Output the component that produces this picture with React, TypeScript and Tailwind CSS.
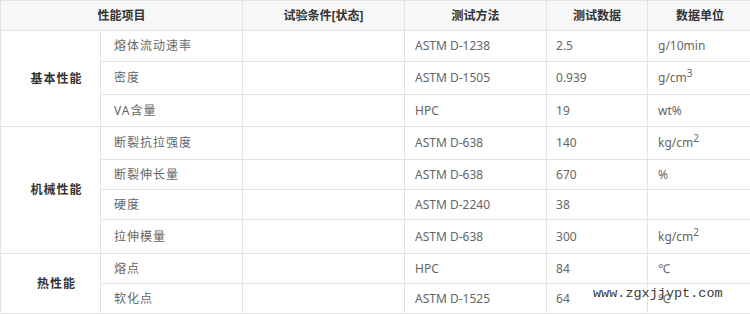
import React from "react";

type Row = {
  group?: string;
  span?: number;
  item: string;
  method: string;
  value: string;
  unit: React.ReactNode;
  h: string;
};

const cm2 = (
  <>
    kg/cm<sup className="text-[10px]">2</sup>
  </>
);

const rows: Row[] = [
  { group: "基本性能", span: 3, item: "熔体流动速率", method: "ASTM D-1238", value: "2.5", unit: "g/10min", h: "h-[31px]" },
  {
    item: "密度",
    method: "ASTM D-1505",
    value: "0.939",
    unit: (
      <>
        g/cm<sup className="text-[10px]">3</sup>
      </>
    ),
    h: "h-[33px]",
  },
  { item: "VA含量", method: "HPC", value: "19", unit: "wt%", h: "h-[32px]" },
  { group: "机械性能", span: 4, item: "断裂抗拉强度", method: "ASTM D-638", value: "140", unit: cm2, h: "h-[33px]" },
  { item: "断裂伸长量", method: "ASTM D-638", value: "670", unit: "%", h: "h-[30px]" },
  { item: "硬度", method: "ASTM D-2240", value: "38", unit: "", h: "h-[30px]" },
  { item: "拉伸模量", method: "ASTM D-638", value: "300", unit: cm2, h: "h-[34px]" },
  { group: "热性能", span: 2, item: "熔点", method: "HPC", value: "84", unit: "℃", h: "h-[30px]" },
  { item: "软化点", method: "ASTM D-1525", value: "64", unit: "℃", h: "h-[30px]" },
];

const cell = "border border-[#e3e3e3] px-[10px] align-middle";

export default function App() {
  return (
    <div className="relative w-[750px] h-[314px] overflow-hidden bg-white font-['Noto_Sans','Noto_Sans_CJK_SC',sans-serif] text-[12px] text-[#666]">
      <table className="w-[752px] border-collapse table-fixed">
        <colgroup>
          <col className="w-[100px]" />
          <col className="w-[142px]" />
          <col className="w-[162px]" />
          <col className="w-[142px]" />
          <col className="w-[101px]" />
          <col className="w-[105px]" />
        </colgroup>
        <thead>
          <tr className="h-[30px] bg-[#f7f7f7] text-[#333] font-bold">
            <th colSpan={2} className={`${cell} text-center`}>性能项目</th>
            <th className={`${cell} text-center`}>试验条件[状态]</th>
            <th className={`${cell} text-center`}>测试方法</th>
            <th className={`${cell} text-center`}>测试数据</th>
            <th className={`${cell} text-center`}>数据单位</th>
          </tr>
        </thead>
        <tbody>
          {rows.map((r, i) => (
            <tr key={i} className={r.h}>
              {r.group && (
                <td rowSpan={r.span} className={`${cell} pl-[22px] text-center font-bold text-[#333] tracking-[1px]`}>
                  {r.group}
                </td>
              )}
              <td className={`${cell} pl-[13px] tracking-[1px]`}>{r.item}</td>
              <td className={cell}></td>
              <td className={cell}>{r.method}</td>
              <td className={`${cell} pl-[9px]`}>{r.value}</td>
              <td className={cell}>{r.unit}</td>
            </tr>
          ))}
        </tbody>
      </table>
      <div className="absolute left-[593px] top-[284px] font-['Liberation_Mono',monospace] text-[13.5px] text-[#3a3a3a]">
        www.zgxjjypt.com
      </div>
    </div>
  );
}
